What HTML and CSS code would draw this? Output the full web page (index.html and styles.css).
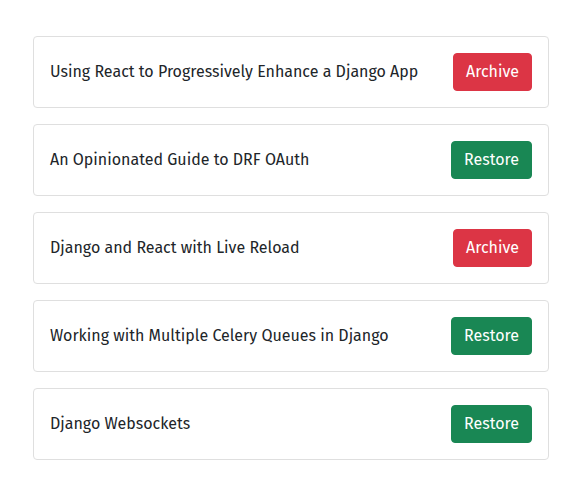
FILE: index.html
```html
<!DOCTYPE html>
<html lang="en">
<head>
<meta charset="utf-8">
<title>Posts</title>
<link rel="stylesheet" href="styles.css">
</head>
<body>
<main class="list">
  <div class="card">
    <span class="title">Using React to Progressively Enhance a Django App</span>
    <button class="btn btn-danger">Archive</button>
  </div>
  <div class="card">
    <span class="title">An Opinionated Guide to DRF OAuth</span>
    <button class="btn btn-success">Restore</button>
  </div>
  <div class="card">
    <span class="title">Django and React with Live Reload</span>
    <button class="btn btn-danger">Archive</button>
  </div>
  <div class="card">
    <span class="title">Working with Multiple Celery Queues in Django</span>
    <button class="btn btn-success">Restore</button>
  </div>
  <div class="card">
    <span class="title">Django Websockets</span>
    <button class="btn btn-success">Restore</button>
  </div>
</main>
</body>
</html>
```
FILE: styles.css
```css
html, body {
  margin: 0;
  padding: 0;
  background: #fff;
}
body {
  font-family: "Fira Sans", Roboto, "Liberation Sans", sans-serif;
  font-size: 16px;
  font-weight: 400;
  line-height: 1.5;
  color: #212529;
}
.list {
  display: flex;
  flex-direction: column;
  gap: 16px;
  padding: 36px 38px 0 33px;
}
.card {
  display: flex;
  align-items: center;
  justify-content: space-between;
  height: 72px;
  box-sizing: border-box;
  padding: 0 16px;
  border: 1px solid #dfdfdf;
  border-radius: 4px;
}
.btn {
  font-family: inherit;
  font-size: 16px;
  font-weight: 400;
  line-height: 1.5;
  padding: 6px 12px;
  border: 1px solid transparent;
  border-radius: 4px;
  color: #fff;
  cursor: pointer;
}
.btn-danger {
  background: #dc3545;
  border-color: #dc3545;
}
.btn-success {
  background: #198754;
  border-color: #198754;
}
```
